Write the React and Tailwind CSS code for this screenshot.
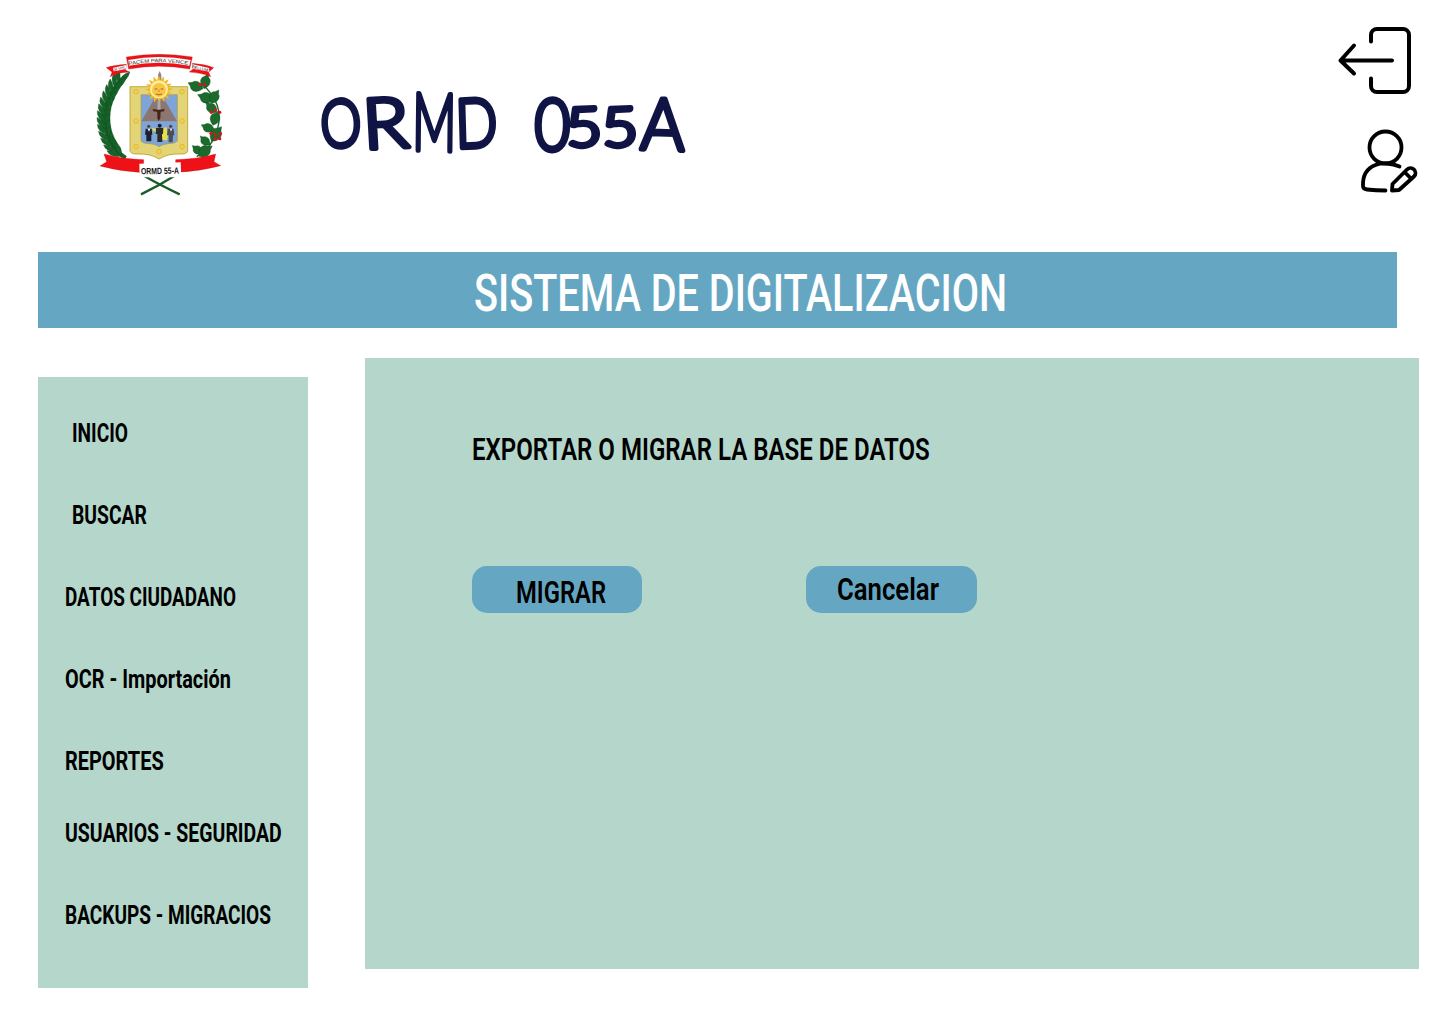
import { useLayoutEffect, useRef, useState } from "react";

// Squeezes a line of text horizontally so that it fills the given width.
function FitText({ text, width, className = "" }) {
  const ref = useRef(null);
  const [scale, setScale] = useState(0.85);
  useLayoutEffect(() => {
    const measure = () => {
      if (ref.current) setScale(width / ref.current.offsetWidth);
    };
    measure();
    document.fonts?.ready.then(measure);
  }, [text, width]);
  return (
    <span
      ref={ref}
      className={"inline-block origin-left whitespace-nowrap " + className}
      style={{ transform: `scaleX(${scale})` }}
    >
      {text}
    </span>
  );
}

const LEFT_LEAVES = [
  [108, 118, 30], [98, 134, 28], [88, 150, 22], [80, 166, 18], [73, 183, 12], [67, 200, 8],
  [64, 218, 2], [63, 236, -4], [64, 254, -10], [67, 272, -15], [72, 290, -20], [80, 307, -27], [90, 323, -34], [101, 337, -40],
];

const RIGHT_LEAVES = [
  [350, 145, -70, 42], [358, 142, 12, 40], [382, 178, -75, 44], [380, 186, 28, 40],
  [392, 214, -50, 38], [385, 252, 18, 40], [384, 268, -72, 36], [382, 300, 32, 46],
  [372, 312, -50, 34], [350, 338, -55, 34], [345, 346, 50, 44],
];

const BERRIES = [
  [345, 134], [359, 134], [379, 217], [391, 210], [404, 217], [378, 280], [391, 283], [406, 281], [391, 297], [404, 296],
];

function Emblem() {
  return (
    <svg viewBox="0 0 450 495" className="h-[165px] w-[150px]" aria-label="ORMD 55-A">
      <defs>
        <path id="motto" d="M132 76 Q222 57 314 76" />
      </defs>
      <g fill="#17642a" stroke="#0c4519" strokeWidth="1">
        <path d="M112 116 Q30 210 66 280 Q82 330 122 354" fill="none" stroke="#17642a" strokeWidth="13" />
        {LEFT_LEAVES.map(([x, y, r], i) => (
          <g key={i} transform={`translate(${x} ${y}) rotate(${r})`}>
            <path d="M0 14 Q-30 -2 -24 -26 Q-4 -12 0 14Z" />
            <path d="M0 14 Q-8 -14 12 -32 Q20 -6 0 14Z" />
          </g>
        ))}
      </g>
      <path d="M348 130 Q420 190 397 270 Q382 322 335 350" fill="none" stroke="#17642a" strokeWidth="4" />
      <g fill="#1b6b2c" stroke="#0c4519" strokeWidth="1">
        {RIGHT_LEAVES.map(([x, y, r, l], i) => (
          <path
            key={i}
            transform={`translate(${x} ${y}) rotate(${r}) scale(${l / 40})`}
            d="M0 4 Q-22 -12 -12 -28 Q-4 -32 2 -42 Q6 -30 12 -26 Q20 -10 0 4Z"
          />
        ))}
      </g>
      {BERRIES.map(([x, y], i) => (
        <circle key={i} cx={x} cy={y} r="5" fill="#d8131c" />
      ))}
      <g fill="none" stroke="#195c25" strokeWidth="7">
        <path d="M168 463 Q225 435 274 404" />
        <path d="M284 463 Q225 435 178 408" />
      </g>
      <g fill="#ee1218" stroke="#b80c10" strokeWidth="1">
        <path d="M64 83 Q88 75 124 73 L122 91 L134 96 Q98 97 76 110 L81 96Z" />
        <path d="M386 83 Q360 73 322 70 L324 88 L313 96 Q350 98 377 110 L371 97Z" />
        <path d="M124 51 Q222 35 322 51 L314 87 Q222 70 131 87Z" />
      </g>
      <path d="M130 60 Q222 42 317 60 L313 77 Q222 59 132 77Z" fill="#fff" />
      <path d="M84 83 L124 75 L122 88 L86 94Z M323 73 L372 84 L373 95 L323 86Z" fill="#fff" />
      <g fontFamily="Liberation Sans" fill="#222">
        <text fontSize="15">
          <textPath href="#motto" textLength="178" lengthAdjust="spacingAndGlyphs">PACEM PARA VENCE</textPath>
        </text>
        <text x="86" y="92" fontSize="12" transform="rotate(-8 86 92)">SI VIS</text>
        <text x="320" y="84" fontSize="12" textLength="50" lengthAdjust="spacingAndGlyphs" transform="rotate(12 320 84)">BELLUM</text>
      </g>
      <path d="M135 140 H308 V335 Q302 344 285 342 Q250 340 222 357 Q195 340 158 342 Q140 343 135 334Z" fill="#e4d478" stroke="#b5a023" strokeWidth="2.5" />
      <g fill="#f5cf48" stroke="#dcae25" strokeWidth="2">
        <circle cx="153" cy="155" r="7" /><circle cx="291" cy="155" r="7" />
        <circle cx="153" cy="243" r="7" /><circle cx="291" cy="243" r="7" />
        <circle cx="153" cy="320" r="7" /><circle cx="291" cy="320" r="7" />
        <circle cx="222" cy="335" r="7" />
      </g>
      <path d="M168 164 H277 V303 Q270 311 250 311 Q233 312 222 320 Q211 312 195 311 Q175 311 168 303Z" fill="#7fa5d8" stroke="#ab9d42" strokeWidth="2" />
      <path d="M169 244 L207 178 H238 L276 244Z" fill="#8c7770" />
      <path d="M198 264 Q222 268 244 262 Q252 280 246 300 Q232 304 222 288Z" fill="#e5e04a" />
      <g fill="#1b2030">
        <circle cx="191" cy="259" r="5" fill="#5b4440" /><path d="M182 266 H200 L202 284 H199 V304 H184 V284 H180Z" />
        <circle cx="224" cy="257" r="6" /><path d="M213 264 H235 L234 282 H231 L232 306 H217 V282 H212Z" fill="#2b2c2c" />
        <circle cx="257" cy="259" r="5" fill="#5b4440" /><path d="M248 266 H266 L268 286 H264 L263 307 H251 V286 H246Z" fill="#4c4d58" />
      </g>
      <path d="M188 266 l4 9 l4 -9Z M255 266 l3 9 l3 -9Z" fill="#fff" />
      <path d="M224 93 L229 104 V130 H219 V104Z" fill="#898b90" />
      <g fill="#f5b526">
        {Array.from({ length: 16 }, (_, i) => (
          <path key={i} d="M215 124 L221 106 L228 124Z" transform={`rotate(${i * 22.5} 222 148)`} />
        ))}
        <circle cx="222" cy="148" r="27" fill="#fff09a" />
        <circle cx="222" cy="150" r="21" fill="#f8c548" />
      </g>
      <path d="M209 147 h8 M227 147 h8 M213 162 Q222 167 231 162" stroke="#a86311" strokeWidth="3" fill="none" />
      <path d="M222 149 V156" stroke="#d08a20" strokeWidth="3" />
      <path d="M218 181 H226 L227 212 H217Z" fill="#aaa" />
      <path d="M203 207 Q222 211 239 207 L237 214 L227 215 L226 235 L221 243 L217 235 V215 L205 214Z" fill="#48211b" />
      <g fill="#ee1218" stroke="#b90b10" strokeWidth="1">
        <path d="M57 342 Q112 357 176 359 V398 Q110 395 45 378 L65 365Z" />
        <path d="M392 342 Q340 357 272 359 V397 Q340 395 407 377 L387 365Z" />
      </g>
      <path d="M163 371 L287 367 L289 412 L164 412Z" fill="#fff" />
      <text x="168" y="403" fontFamily="Liberation Sans" fontSize="27" fontWeight="700" fill="#151515" textLength="114" lengthAdjust="spacingAndGlyphs" transform="rotate(-1 168 403)">ORMD 55-A</text>
    </svg>
  );
}

// Each letter has its own size, width and tilt: [letter, x, baseline, size, length, tilt]
const WORDMARK = [
  ["O", 322, 149, 66, 41, -5],
  ["R", 364, 149, 70, 46, -3],
  ["M", 412, 150, 80, 44, 1],
  ["D", 456, 148, 68, 42, -2],
  [" ", 500, 148, 68, 30, 0],
  ["0", 534, 150, 72, 36, 1],
  ["5", 567, 147, 54, 36, -3],
  ["5", 603, 147, 54, 36, -3],
  ["A", 640, 149, 72, 44, 2],
];

function Wordmark() {
  return (
    <svg viewBox="300 60 410 120" className="h-[120px] w-[410px]">
      <text fontFamily="Lato, sans-serif" fontWeight="300" fill="#0f1445" stroke="#0f1445" strokeWidth="5" strokeLinejoin="round" strokeLinecap="round" xmlSpace="preserve">
        {WORDMARK.map(([ch, x, y, size, len, tilt], i) => (
          <tspan key={i} x={x} y={y} fontSize={size} textLength={len} lengthAdjust="spacingAndGlyphs" rotate={tilt}>
            {ch}
          </tspan>
        ))}
      </text>
    </svg>
  );
}

function LogoutIcon() {
  return (
    <svg viewBox="0 0 76 70" className="h-[70px] w-[76px]" fill="none" stroke="#000" strokeWidth="4" strokeLinecap="round" strokeLinejoin="round">
      <path d="M34 16.500V10a6 6 0 0 1 6-6h26a6 6 0 0 1 6 6v51a6 6 0 0 1-6 6H40a6 6 0 0 1-6-6v-7.500" />
      <path d="M55 35.500H3.500M17 20.500L3.500 35.500L17 48.500" />
    </svg>
  );
}

function EditUserIcon() {
  return (
    <svg viewBox="0 0 60 66" className="h-[66px] w-[60px]" fill="none" stroke="#000" strokeWidth="3.800" strokeLinecap="round" strokeLinejoin="round">
      <circle cx="27.500" cy="19.500" r="16" />
      <path d="M41.500 38.500C34 35 24 34.500 17.500 37C8.500 40.500 4.500 48 5 58Q5 61 9 61.500Q18 62.500 27.500 62.500" />
      <path d="M34.500 56L49 41.500a4.800 4.800 0 0 1 7 7L41 62L34 62.500ZM46.500 44l6 6" />
    </svg>
  );
}

const MENU = [
  { label: "INICIO", width: 56, row: "h-[82px] pl-[34px]" },
  { label: "BUSCAR", width: 75, row: "h-[82px] pl-[34px]" },
  { label: "DATOS CIUDADANO", width: 171, row: "h-[82px] pl-[27px]" },
  { label: "OCR - Importación", width: 166, row: "h-[82px] pl-[27px]" },
  { label: "REPORTES", width: 99, row: "h-[82px] pl-[27px]" },
  { label: "USUARIOS - SEGURIDAD", width: 217, row: "-mt-[10px] h-[82px] pl-[27px]" },
  { label: "BACKUPS - MIGRACIOS", width: 206, row: "h-[82px] pl-[27px]" },
];

export default function App() {
  return (
    <div className="h-[1024px] w-[1440px] overflow-hidden bg-white font-['Roboto',sans-serif] text-black">
      <header className="flex h-[252px] items-start">
        <div className="ml-[85px] mt-10">
          <Emblem />
        </div>
        <div className="ml-[65px] mt-[60px]">
          <Wordmark />
        </div>
        <div className="ml-auto mr-6 mt-[25px] flex flex-col items-end gap-[33px]">
          <button aria-label="Salir" className="mr-[3px]">
            <LogoutIcon />
          </button>
          <button aria-label="Editar usuario" className="-mr-[2px]">
            <EditUserIcon />
          </button>
        </div>
      </header>

      <h1 className="ml-[38px] flex h-[76px] w-[1359px] items-center bg-[#65a7c2] pl-[436px] pt-[8px] text-[52px] font-medium leading-none text-white">
        <FitText text="SISTEMA DE DIGITALIZACION" width={533} />
      </h1>

      <main className="flex items-start">
        <nav className="ml-[38px] mt-[49px] h-[611px] w-[270px] bg-[#b4d6cb] pt-[15px] text-[26px] font-bold leading-none">
          {MENU.map((item) => (
            <a key={item.label} className={"flex items-center " + item.row}>
              <FitText text={item.label} width={item.width} />
            </a>
          ))}
        </nav>

        <section className="ml-[57px] mt-[30px] h-[611px] w-[1054px] bg-[#b4d6cb] pl-[107px] pt-[75px] text-[32px] font-semibold leading-none">
          <h2 className="h-8">
            <FitText text="EXPORTAR O MIGRAR LA BASE DE DATOS" width={458} />
          </h2>
          <div className="mt-[101px] flex gap-[164px]">
            <button className="flex h-[47px] w-[170px] items-center rounded-[15px] bg-[#65a7c2] pl-[44px] pt-[5px]">
              <FitText text="MIGRAR" width={90} />
            </button>
            <button className="flex h-[47px] w-[171px] items-center rounded-[15px] bg-[#65a7c2] pb-[2px] pl-[31px]">
              <FitText text="Cancelar" width={102} />
            </button>
          </div>
        </section>
      </main>
    </div>
  );
}
